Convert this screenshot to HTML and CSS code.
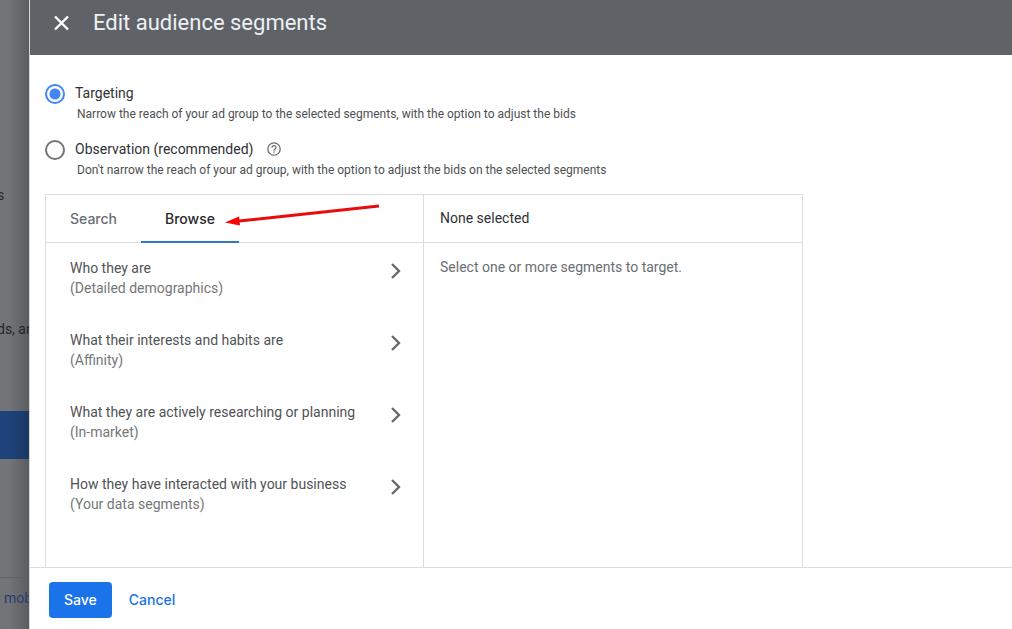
FILE: index.html
```html
<!DOCTYPE html>
<html lang="en">
<head>
<meta charset="utf-8">
<title>Edit audience segments</title>
<link rel="stylesheet" href="styles.css">
</head>
<body>
<div class="screen">
  <div class="backdrop">
    <p class="backdrop-line first">s</p>
    <p class="backdrop-line second">ds, and</p>
    <div class="backdrop-block"></div>
    <a class="backdrop-link" href="#">mobile</a>
  </div>
  <section class="dialog" role="dialog" aria-labelledby="dialog-title">
    <header class="dialog-header">
      <button class="close" type="button" aria-label="Close">
        <svg width="24" height="24" viewBox="0 0 24 24"><path d="M5 5.5L18 18.5M18 5.5L5 18.5" fill="none" stroke="#fff" stroke-width="2.4"/></svg>
      </button>
      <h1 id="dialog-title">Edit audience segments</h1>
    </header>
    <main class="content">
      <div class="option">
        <input type="radio" name="mode" id="targeting" checked aria-describedby="targeting-hint">
        <div class="option-text">
          <div class="option-title"><label for="targeting">Targeting</label></div>
          <p id="targeting-hint">Narrow the reach of your ad group to the selected segments, with the option to adjust the bids</p>
        </div>
      </div>
      <div class="option">
        <input type="radio" name="mode" id="observation" aria-describedby="observation-hint">
        <div class="option-text">
          <div class="option-title"><label for="observation">Observation (recommended)</label>
            <button class="help" type="button" aria-label="Help">
              <svg width="14" height="14" viewBox="0 0 14 14" fill="none" stroke="#6b6e72" stroke-width="1.3"><circle cx="7" cy="7" r="6.2"/><path d="M5 5.8C5 4.5 5.8 3.7 7 3.7S9 4.5 9 5.6C9 7 7 7 7 8.7M7 9.5V10.8"/></svg>
            </button>
          </div>
          <p id="observation-hint">Don't narrow the reach of your ad group, with the option to adjust the bids on the selected segments</p>
        </div>
      </div>
      <div class="picker">
        <div class="pane">
          <div class="tabs" role="tablist">
            <button class="tab" type="button" role="tab" aria-selected="false">Search</button>
            <button class="tab active" type="button" role="tab" aria-selected="true">Browse</button>
            <svg class="pointer" width="156" height="24" viewBox="0 0 156 24"><path d="M14 17L154 2" stroke="#e80c0c" stroke-width="3"/><path d="M0 18.5L14 12.5L15 21.5Z" fill="#f00"/></svg>
          </div>
          <div class="segments">
            <button class="segment" type="button">
              <span><span class="name">Who they are</span><span class="kind">(Detailed demographics)</span></span>
              <svg width="12" height="18" viewBox="0 0 12 18"><path d="M2 2L9 9L2 16" fill="none" stroke="#66696d" stroke-width="2.4"/></svg>
            </button>
            <button class="segment" type="button">
              <span><span class="name">What their interests and habits are</span><span class="kind">(Affinity)</span></span>
              <svg width="12" height="18" viewBox="0 0 12 18"><path d="M2 2L9 9L2 16" fill="none" stroke="#66696d" stroke-width="2.4"/></svg>
            </button>
            <button class="segment" type="button">
              <span><span class="name">What they are actively researching or planning</span><span class="kind">(In-market)</span></span>
              <svg width="12" height="18" viewBox="0 0 12 18"><path d="M2 2L9 9L2 16" fill="none" stroke="#66696d" stroke-width="2.4"/></svg>
            </button>
            <button class="segment" type="button">
              <span><span class="name">How they have interacted with your business</span><span class="kind">(Your data segments)</span></span>
              <svg width="12" height="18" viewBox="0 0 12 18"><path d="M2 2L9 9L2 16" fill="none" stroke="#66696d" stroke-width="2.4"/></svg>
            </button>
          </div>
        </div>
        <div class="pane">
          <h2>None selected</h2>
          <p class="empty">Select one or more segments to target.</p>
        </div>
      </div>
    </main>
    <footer class="actions">
      <button class="save" type="button">Save</button>
      <button class="cancel" type="button">Cancel</button>
    </footer>
  </section>
</div>
</body>
</html>
```
FILE: styles.css
```css
* { box-sizing: border-box; }
body, h1, h2, p { margin: 0; }
body {
  font: 14px/20px Roboto, sans-serif;
  color: #3c4043;
  background: #fff;
}
button {
  padding: 0;
  border: 0;
  background: none;
  font: inherit;
  color: inherit;
  text-align: left;
  cursor: pointer;
}
svg { display: block; flex: none; }

.screen {
  display: grid;
  grid-template-columns: 29px minmax(0, 1fr);
  height: 100vh;
}

.backdrop {
  display: flex;
  flex-direction: column;
  overflow: hidden;
  white-space: nowrap;
  background: linear-gradient(90deg, #727478 30%, #5c5d60);
}
.backdrop-line { color: #242529; }
.first { margin: 185px 0 0 -3px; }
.second { margin: 114px 0 0 -3px; }
.backdrop-block {
  flex: none;
  height: 48px;
  margin: 72px 0 118px;
  background: linear-gradient(90deg, #1e437c 30%, #193664);
}
.backdrop-link {
  padding: 10px 0 0 4px;
  border-top: 1px solid #606165;
  color: #263d70;
  text-decoration: none;
}

.dialog {
  display: flex;
  flex-direction: column;
  min-width: 0;
  min-height: 0;
  background: #fff;
  border-left: 1px solid #d4d5d6;
}
.dialog-header {
  display: flex;
  align-items: center;
  gap: 19px;
  flex: none;
  height: 55px;
  padding: 0 20px 9px;
  background: #5f6368;
  color: #eef0f3;
}
.dialog-header h1 {
  font: 400 22px/28px Roboto, sans-serif;
}

.content {
  display: flex;
  flex-direction: column;
  flex: 1;
  min-height: 0;
  padding: 28px 15px 0;
}
.option {
  display: flex;
  gap: 10px;
}
.option + .option { margin-top: 14px; }
.option input {
  appearance: none;
  flex: none;
  width: 20px;
  height: 20px;
  margin: 1px 0 0;
  border: 2px solid #757575;
  border-radius: 50%;
}
.option input:checked {
  border-color: #4285f4;
  background: radial-gradient(circle, #4285f4 5px, #fff 6px);
}
.option-title {
  display: flex;
  align-items: center;
  gap: 14px;
  color: #303134;
}
.option p {
  padding-left: 2px;
  font-size: 12px;
  line-height: 22px;
  color: #4d5053;
}

.picker {
  display: grid;
  grid-template-columns: 1fr 1fr;
  flex: 1;
  min-height: 0;
  width: 100%;
  max-width: 758px;
  margin-top: 13px;
  border: 1px solid #dadce0;
  border-bottom: 0;
}
.pane:first-child { border-right: 1px solid #dadce0; }
.tabs {
  position: relative;
  display: flex;
  height: 48px;
  border-bottom: 1px solid #dadce0;
}
.tab {
  height: 48px;
  padding: 2px 24px 0;
  border-bottom: 2px solid transparent;
  font: 500 14px/20px Inter, sans-serif;
  color: #6b6e72;
}
.active {
  border-color: #3578bd;
  color: #28292c;
}
.pointer {
  position: absolute;
  left: 179px;
  top: 9px;
}
.segments { padding-top: 3px; }
.segment {
  display: flex;
  justify-content: space-between;
  width: 100%;
  height: 72px;
  padding: 12px 21px 0 24px;
}
.segment svg { margin-top: 4px; }
.name, .kind { display: block; }
.name { color: #505356; }
.kind { color: #74777a; }
.pane h2 {
  height: 48px;
  padding: 13px 16px 0;
  border-bottom: 1px solid #dadce0;
  font: 400 14px/20px Roboto, sans-serif;
  color: #303134;
}
.empty {
  padding: 14px 16px;
  color: #6b6e72;
}

.actions {
  display: flex;
  align-items: center;
  gap: 17px;
  flex: none;
  height: 62px;
  padding: 3px 19px 0;
  border-top: 1px solid #dadce0;
  font: 500 14px/20px Inter, sans-serif;
}
.save {
  height: 36px;
  padding: 0 15px;
  border-radius: 4px;
  background: #1a73e8;
  color: #fff;
}
.cancel { color: #1a73e8; }
```
